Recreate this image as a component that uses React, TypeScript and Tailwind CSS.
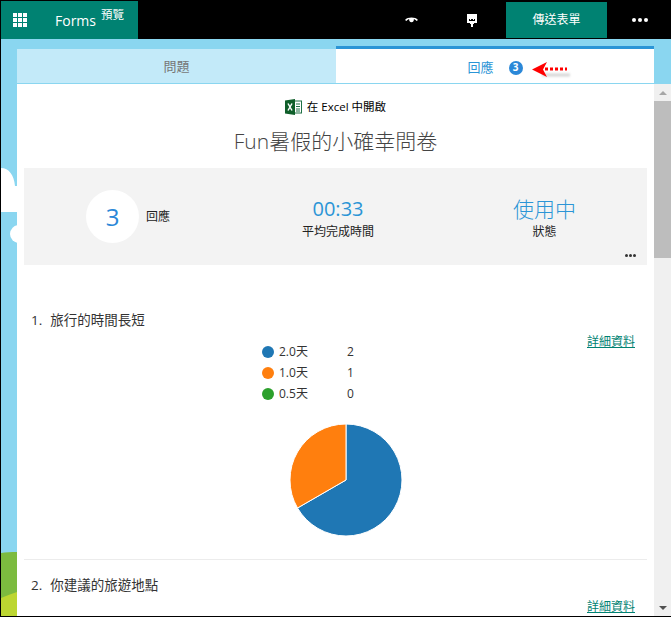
const font = { fontFamily: '"Open Sans", "Noto Sans CJK TC", sans-serif' }

function GridIcon() {
  return (
    <div className="grid grid-cols-3 gap-px w-[14px]">
      {Array.from({ length: 9 }).map((_, i) => (
        <div key={i} className="h-[4px] bg-white" />
      ))}
    </div>
  )
}

function EyeIcon() {
  return (
    <svg className="ml-[267px]" width="13" height="8" viewBox="0 0 14 8">
      <path d="M0 4C3 .5 11 .5 14 4l-1.500 1C11 3.500 9.500 3 9.500 3A2.600 2.600 0 1 1 4.500 3S3 3.500 1.500 5z" fill="#fff" />
    </svg>
  )
}

function ExcelIcon() {
  return (
    <svg width="17" height="16" viewBox="0 0 17 16">
      <rect x="9" y="2" width="7.500" height="12" fill="#fff" stroke="#1e7145" />
      <path d="M11 5h4M11 7.500h4M11 10h4M11 12h4" stroke="#1e7145" />
      <path d="M0 1.500L10 0v16L0 14.500z" fill="#0f5f2a" />
      <path d="M3 4.500l4 7M7 4.500l-4 7" stroke="#fff" strokeWidth="1.500" />
    </svg>
  )
}

function LegendRow({ color, label, value }: { color: string; label: string; value: number }) {
  return (
    <div className="flex items-center h-[21px] text-[12px] text-[#333]">
      <div className={`w-[12px] h-[12px] rounded-full ${color}`} />
      <span className="ml-[5px] w-[68px]">{label}</span>
      <span>{value}</span>
    </div>
  )
}

function PieChart() {
  return (
    <svg width="114" height="114" viewBox="0 0 114 114">
      <path d="M57 57L57 1A56 56 0 1 1 8.500 85Z" fill="#1f77b4" stroke="#fff" strokeWidth="1" />
      <path d="M57 57L8.500 85A56 56 0 0 1 57 1Z" fill="#ff7f0e" stroke="#fff" strokeWidth="1" />
    </svg>
  )
}

export default function App() {
  return (
    <div className="relative w-[671px] h-[617px] overflow-hidden bg-[#8ad6f0] border-l border-b border-black" style={font}>
      {/* Header */}
      <div className="relative z-10 flex items-center h-[39px] bg-black pt-px">
        <div className="flex items-center w-[137px] h-[38px] bg-[#008272] text-white">
          <div className="ml-[12px]"><GridIcon /></div>
          <span className="ml-[28px] text-[14px]">Forms</span>
          <span className="ml-[5px] mb-[11px] text-[11.500px]">預覽</span>
        </div>
        <EyeIcon />
        <svg className="ml-[49px]" width="10" height="13" viewBox="0 0 10 13">
          <path d="M0 0h10v9H7v1H6v3H4v-3H3V9H0z" fill="#fff" />
          <path d="M2 5h1v1h1V5h2v1h1V5h1v2H2z" fill="#000" />
        </svg>
        <div className="ml-[29px] w-[101px] h-[36px] bg-[#008272] text-white text-[12px] flex items-center justify-center">傳送表單</div>
        <div className="ml-[25px] flex gap-[2px]">
          <div className="w-[4px] h-[4px] rounded-full bg-white" />
          <div className="w-[4px] h-[4px] rounded-full bg-white" />
          <div className="w-[4px] h-[4px] rounded-full bg-white" />
        </div>
      </div>

      {/* Background art */}
      <svg className="absolute left-0 top-[39px]" width="16" height="577" viewBox="0 0 16 577">
        <path d="M0 129c8 0 13 7 14 18h2v26H0z" fill="#fff" />
        <circle cx="18" cy="195" r="9" fill="#fff" />
        <path d="M0 514c5-1 10-1 16-1v64H0z" fill="#7cbb3f" />
        <path d="M0 559c5-2 10-4 16-6v24H0z" fill="#bcd631" />
      </svg>

      <div className="relative pt-[7px] pl-[16px]">
        {/* Tabs */}
        <div className="flex w-[637px] h-[38px] items-stretch">
          <div className="w-[319px] mt-[3px] pt-[2px] bg-[#c3eaf9] border-b border-[#8ad6f0] text-[13px] text-[#777] flex items-center justify-center">問題</div>
          <div className="relative w-[318px] pt-[3px] bg-white border-t-[3px] border-[#2b95d6] border-b border-b-[#8ad6f0] text-[13px] text-[#2b95d6] flex items-center justify-center">
            <span>回應</span>
            <span className="ml-[15px] w-[14px] h-[14px] rounded-full bg-[#2b88d8] text-white text-[10px] font-bold flex items-center justify-center">3</span>
            <svg className="absolute left-[194px] top-[13px]" width="44" height="20" viewBox="0 0 44 20">
              <path className="blur-[1px]" d="M12 13h28" stroke="#999" strokeWidth="3" opacity="0.4" />
              <path d="M2 7.500L17 0l-4 7.500 4 7.500z" fill="#f00" />
              <path d="M15 7h22" stroke="#f00" strokeWidth="3" strokeDasharray="3 2" />
            </svg>
          </div>
        </div>

        {/* Content */}
        <div className="flex h-[532px]">
          <div className="w-[637px] h-full bg-white px-[7px] overflow-hidden">
            <div className="flex items-center justify-center h-[24px] mt-[11px] text-[11.500px] text-black gap-[5px]">
              <ExcelIcon />
              <span>在 Excel 中開啟</span>
            </div>
            <h1 className="text-[21px] leading-[28px] mt-[8px] text-center text-[#444] font-light">Fun暑假的小確幸問卷</h1>

            {/* Summary */}
            <div className="relative flex items-center h-[97px] mt-[13px] bg-[#f3f3f3]">
              <div className="flex items-center w-[210px] pl-[62px]">
                <div className="w-[53px] h-[53px] rounded-full bg-white text-[#2b88d8] text-[24px] flex items-center justify-center">3</div>
                <span className="ml-[7px] text-[12px] text-[#222]">回應</span>
              </div>
              <div className="w-[208px] flex flex-col items-center">
                <span className="text-[20px] leading-[28px] text-[#2b95d6] mt-[2px]">00:33</span>
                <span className="text-[12px] leading-[18px] text-[#222]">平均完成時間</span>
              </div>
              <div className="flex-1 flex flex-col items-center">
                <span className="text-[21px] leading-[28px] font-light text-[#2b95d6] mt-[3px]">使用中</span>
                <span className="text-[12px] leading-[18px] text-[#222]">狀態</span>
              </div>
              <div className="absolute right-[11px] bottom-[8px] flex gap-[1px]">
                <div className="w-[3px] h-[3px] rounded-full bg-[#333]" />
                <div className="w-[3px] h-[3px] rounded-full bg-[#333]" />
                <div className="w-[3px] h-[3px] rounded-full bg-[#333]" />
              </div>
            </div>

            {/* Question 1 */}
            <div className="px-[7px] mt-[45px] text-[13.500px] leading-[20px] text-[#333]">
              <span>1.</span><span className="ml-[8px]">旅行的時間長短</span>
            </div>
            <div className="flex justify-end pr-[12px] mt-[3px]">
              <a className="text-[12px] leading-[18px] text-[#008272] underline">詳細資料</a>
            </div>
            <div className="ml-[238px] -mt-[10px]">
              <LegendRow color="bg-[#1f77b4]" label="2.0天" value={2} />
              <LegendRow color="bg-[#ff7f0e]" label="1.0天" value={1} />
              <LegendRow color="bg-[#2ca02c]" label="0.5天" value={0} />
            </div>
            <div className="ml-[265px] mt-[19px]"><PieChart /></div>
            <div className="mt-[22px] border-t border-[#ececec]" />

            {/* Question 2 */}
            <div className="px-[7px] mt-[15px] text-[13.500px] leading-[20px] text-[#333]">
              <span>2.</span><span className="ml-[8px]">你建議的旅遊地點</span>
            </div>
            <div className="flex justify-end pr-[12px] mt-[3px]">
              <a className="text-[12px] leading-[18px] text-[#008272] underline">詳細資料</a>
            </div>
          </div>

          {/* Scrollbar */}
          <div className="w-[17px] h-full bg-[#f0f0f0] flex flex-col items-center">
            <div className="h-[17px] flex items-center justify-center">
              <div className="w-0 h-0 border-x-[4px] border-x-transparent border-b-[4px] border-b-[#a6a6a6]" />
            </div>
            <div className="w-full h-[157px] bg-[#bdbdbd]" />
            <div className="flex-1" />
            <div className="h-[17px] flex items-center justify-center">
              <div className="w-0 h-0 border-x-[4px] border-x-transparent border-t-[4px] border-t-[#505050]" />
            </div>
          </div>
        </div>
      </div>
    </div>
  )
}
